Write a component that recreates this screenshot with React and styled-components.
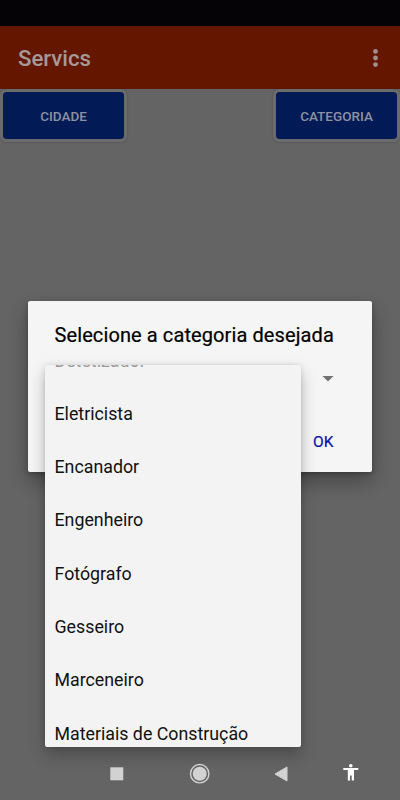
import React from 'react';
import styled, { createGlobalStyle } from 'styled-components';

const GlobalStyle = createGlobalStyle`
    body {
        margin: 0;
        overflow: hidden;
        font-family: Roboto, sans-serif;
    }
`;

const Screen = styled.div`
    position: relative;
    display: flex;
    flex-direction: column;
    width: 400px;
    height: 800px;
    overflow: hidden;
    background: #646464;
`;

const StatusBar = styled.div`
    height: 26px;
    background: #050305;
`;

const AppBar = styled.header`
    display: flex;
    align-items: center;
    justify-content: space-between;
    box-sizing: border-box;
    height: 63px;
    padding: 2px 21px 0 18px;
    background: #641600;
`;

const AppTitle = styled.h1`
    margin: 0 0 2px;
    font-size: 22.2px;
    font-weight: 500;
    line-height: 26px;
    color: #a59a97;
`;

const MenuDots = styled.svg`
    display: block;
    width: 7px;
    height: 20px;
    margin-bottom: 2px;
    fill: #9e908c;
`;

const Filters = styled.div`
    display: flex;
    justify-content: space-between;
`;

const FilterButton = styled.button`
    box-sizing: content-box;
    width: 121px;
    height: 47px;
    padding: 0;
    border: 3px solid #6b6b6b;
    border-radius: 6px;
    background: #021b57;
    background-clip: padding-box;
    box-shadow: 0 0 2px rgba(0, 0, 0, 0.25);
    font-family: inherit;
    font-size: 13.5px;
    font-weight: 500;
    color: #8d91a0;
`;

const Backdrop = styled.div`
    position: absolute;
    inset: 0;
`;

const Dialog = styled.section`
    box-sizing: border-box;
    display: flex;
    flex-direction: column;
    width: 344px;
    height: 171.5px;
    margin: 300.5px 0 0 28px;
    padding: 20.5px 38.5px 0 26.5px;
    border-radius: 2px;
    background: #f5f5f5;
    box-shadow: 0 9px 20px rgba(0, 0, 0, 0.32), 0 2px 5px rgba(0, 0, 0, 0.22);
`;

const DialogTitle = styled.h2`
    margin: 0;
    font-size: 20px;
    font-weight: 400;
    line-height: 28px;
    letter-spacing: 0.1px;
    white-space: nowrap;
    color: #000;
    -webkit-text-stroke: 0.2px #000;
`;

const SpinnerRow = styled.div`
    display: flex;
    align-items: center;
    justify-content: flex-end;
    height: 60px;
`;

const OkButton = styled.button`
    align-self: flex-end;
    margin-top: 22.5px;
    padding: 0;
    border: 0;
    background: none;
    font-family: inherit;
    font-size: 15.5px;
    font-weight: 400;
    line-height: 20px;
    color: #0a12a8;
    -webkit-text-stroke: 0.2px #0a12a8;
`;

/* dropdown floats over the dialog */
const Popup = styled.ul`
    position: absolute;
    top: 365px;
    left: 45px;
    box-sizing: border-box;
    width: 256px;
    height: 382px;
    margin: 0;
    padding: 0;
    overflow: hidden;
    list-style: none;
    border-radius: 2px;
    background: #f3f3f3;
    box-shadow: 0 8px 16px rgba(0, 0, 0, 0.25), 0 0 5px rgba(0, 0, 0, 0.12);
`;

const Option = styled.li`
    height: 53.33px;
    padding-left: 9.5px;
    font-size: 17.8px;
    line-height: 53.33px;
    white-space: nowrap;
    color: ${({ $faded }) => ($faded ? '#999' : '#111')};

    &:first-child {
        margin-top: -31.5px;
    }
`;

const NavBar = styled.nav`
    position: absolute;
    bottom: 0;
    left: 0;
    right: 0;
    height: 53px;
    display: flex;
    align-items: center;
    padding-left: 109px;
`;

const NavIcon = styled.svg`
    display: block;
    width: 16px;
    height: 22px;
    overflow: visible;
    margin-right: ${({ $gap }) => $gap || 0}px;
`;

const options = [
    'Detetizador',
    'Eletricista',
    'Encanador',
    'Engenheiro',
    'Fotógrafo',
    'Gesseiro',
    'Marceneiro',
    'Materiais de Construção',
];

const App = () => (
    <Screen>
        <GlobalStyle />
        <StatusBar />
        <AppBar>
            <AppTitle>Servics</AppTitle>
            <MenuDots>
                <circle cx="3.5" cy="3.4" r="2.4" />
                <circle cx="3.5" cy="10" r="2.4" />
                <circle cx="3.5" cy="16.6" r="2.4" />
            </MenuDots>
        </AppBar>
        <Filters>
            <FilterButton>CIDADE</FilterButton>
            <FilterButton>CATEGORIA</FilterButton>
        </Filters>
        <Backdrop>
            <Dialog>
                <DialogTitle>Selecione a categoria desejada</DialogTitle>
                <SpinnerRow>
                    <svg width="12" height="6">
                        <path d="M0.5 0h11L6 5.5z" fill="#707070" />
                    </svg>
                </SpinnerRow>
                <OkButton>OK</OkButton>
            </Dialog>
            <Popup>
                {options.map((name, i) => (
                    <Option key={name} $faded={i === 0}>{name}</Option>
                ))}
            </Popup>
        </Backdrop>
        <NavBar>
            <NavIcon $gap={67}>
                <rect x="1.3" y="4.3" width="13" height="13" fill="#d2d2d2" />
            </NavIcon>
            <NavIcon $gap={65}>
                <circle cx="7.7" cy="10.7" r="9.2" fill="none" stroke="#d2d2d2" strokeWidth="1.4" />
                <circle cx="7.7" cy="10.7" r="7" fill="#d2d2d2" />
            </NavIcon>
            <NavIcon $gap={54}>
                <path d="M2 11L14 4v14z" fill="#d2d2d2" stroke="#d2d2d2" strokeLinejoin="round" />
            </NavIcon>
            <NavIcon>
                <circle cx="7.8" cy="2.8" r="1.8" fill="#fff" />
                <path d="M0.3 5h15v2H11v10.4H8.7v-5H7v5H4.8V7H0.3z" fill="#fff" />
            </NavIcon>
        </NavBar>
    </Screen>
);

export default App;
